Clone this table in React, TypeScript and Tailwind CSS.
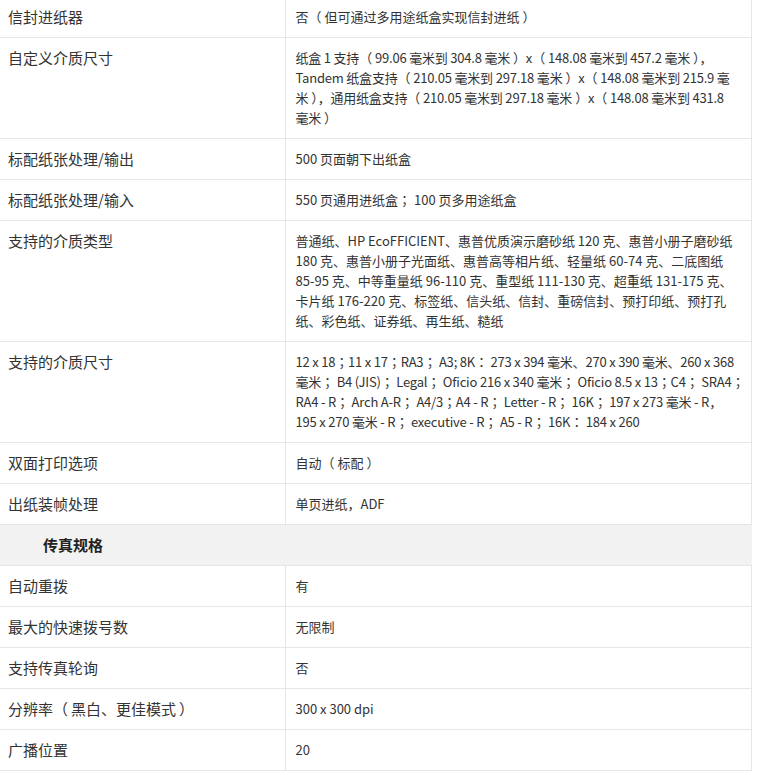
import React from "react";

type Row = { label: string; lines: string[]; tight?: boolean };

const rowsTop: Row[] = [
  { label: "信封进纸器", lines: ["否（但可通过多用途纸盒实现信封进纸）"] },
  {
    label: "自定义介质尺寸",
    tight: true,
    lines: [
      "纸盒 1 支持（99.06 毫米到 304.8 毫米）x（148.08 毫米到 457.2 毫米），",
      "Tandem 纸盒支持（210.05 毫米到 297.18 毫米）x（148.08 毫米到 215.9 毫",
      "米），通用纸盒支持（210.05 毫米到 297.18 毫米）x（148.08 毫米到 431.8",
      "毫米）",
    ],
  },
  { label: "标配纸张处理/输出", lines: ["500 页面朝下出纸盒"] },
  { label: "标配纸张处理/输入", lines: ["550 页通用进纸盒； 100 页多用途纸盒"] },
  {
    label: "支持的介质类型",
    lines: [
      "普通纸、HP EcoFFICIENT、惠普优质演示磨砂纸 120 克、惠普小册子磨砂纸",
      "180 克、惠普小册子光面纸、惠普高等相片纸、轻量纸 60-74 克、二底图纸",
      "85-95 克、中等重量纸 96-110 克、重型纸 111-130 克、超重纸 131-175 克、",
      "卡片纸 176-220 克、标签纸、信头纸、信封、重磅信封、预打印纸、预打孔",
      "纸、彩色纸、证券纸、再生纸、糙纸",
    ],
  },
  {
    label: "支持的介质尺寸",
    tight: true,
    lines: [
      "12 x 18；11 x 17；RA3； A3; 8K： 273 x 394 毫米、270 x 390 毫米、260 x 368",
      "毫米； B4 (JIS)； Legal； Oficio 216 x 340 毫米； Oficio 8.5 x 13；C4； SRA4；",
      "RA4 - R； Arch A-R； A4/3；A4 - R； Letter - R； 16K； 197 x 273 毫米 - R，",
      "195 x 270 毫米 - R； executive - R； A5 - R； 16K： 184 x 260",
    ],
  },
  { label: "双面打印选项", lines: ["自动（标配）"] },
  { label: "出纸装帧处理", lines: ["单页进纸，ADF"] },
];

const rowsBottom: Row[] = [
  { label: "自动重拨", lines: ["有"] },
  { label: "最大的快速拨号数", lines: ["无限制"] },
  { label: "支持传真轮询", lines: ["否"] },
  { label: "分辨率（黑白、更佳模式）", lines: ["300 x 300 dpi"] },
  { label: "广播位置", lines: ["20"] },
];

function fmt(s: string) {
  return s.split(/([（）；：])/).map((p, i) => {
    if (p === "（")
      return (
        <span key={i} className="pr-[3px]">
          （
        </span>
      );
    if (p === "）")
      return (
        <span key={i} className="pl-[3px]">
          ）
        </span>
      );
    if (p === "；" || p === "：")
      return (
        <span key={i} className="font-['Noto_Sans_CJK_JP',sans-serif]">
          {p}
        </span>
      );
    return <React.Fragment key={i}>{p}</React.Fragment>;
  });
}

function DataRow({ row, first }: { row: Row; first?: boolean }) {
  return (
    <tr>
      <td
        className={`w-[285px] align-top border-b border-r border-[#e6e6e6] pl-[8px] pr-[10px] pb-[10px] text-[15px] leading-[20px] text-[#333333] ${
          first ? "pt-[7px]" : "pt-[10px]"
        }`}
      >
        {fmt(row.label)}
      </td>
      <td
        className={`align-top border-b border-r border-[#e6e6e6] pl-[10px] pr-[4px] pb-[10px] text-[13px] leading-[20px] text-[#333333] ${
          first ? "pt-[7px]" : "pt-[10px]"
        } ${row.tight ? "tracking-[-0.2px]" : ""}`}
      >
        {row.lines.map((l, i) => (
          <div key={i} className="whitespace-nowrap">
            {fmt(l)}
          </div>
        ))}
      </td>
    </tr>
  );
}

export default function App() {
  return (
    <div className="w-[757px] h-[775px] bg-white overflow-hidden font-['Noto_Sans_CJK_SC','Noto_Sans',sans-serif]">
      <table className="w-[752px] border-collapse table-fixed">
        <colgroup>
          <col className="w-[285px]" />
          <col />
        </colgroup>
        <tbody>
          {rowsTop.map((r, i) => (
            <DataRow key={r.label} row={r} first={i === 0} />
          ))}
          <tr>
            <td
              colSpan={2}
              className="bg-[#f2f2f2] border-b border-[#e6e6e6] pl-[43px] py-[10px] text-[15px] leading-[20px] font-bold text-[#222222]"
            >
              传真规格
            </td>
          </tr>
          {rowsBottom.map((r) => (
            <DataRow key={r.label} row={r} />
          ))}
        </tbody>
      </table>
    </div>
  );
}
